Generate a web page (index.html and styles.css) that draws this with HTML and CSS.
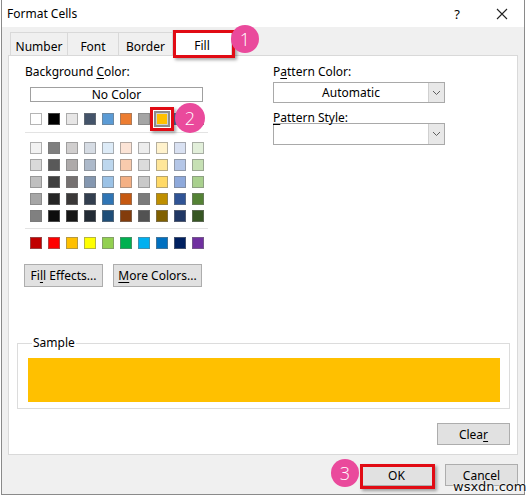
FILE: index.html
```html
<!DOCTYPE html>
<html>
<head>
<meta charset="utf-8">
<link rel="stylesheet" href="styles.css">
</head>
<body>
<div class="window">
  <div class="titlebar">
    <span class="title">Format Cells</span>
    <span class="help">?</span>
    <svg class="close" width="12" height="12" viewBox="0 0 12 12"><path d="M1 1L11 11M11 1L1 11" stroke="#222" stroke-width="1.1" fill="none"/></svg>
  </div>
  <div class="client">
    <div class="tabs">
      <div class="tab tab-number">Number</div>
      <div class="tab tab-font">Font</div>
      <div class="tab tab-border">Border</div>
      <div class="tab tab-fill active">Fill</div>
    </div>
    <div class="panel">
      <div class="top">
        <div class="left">
          <div class="label bg-label">Background <u>C</u>olor:</div>
          <div class="nocolor">No Color</div>
          <div class="swatches row1">
            <span class="sw" style="background:#FFFFFF"></span>
            <span class="sw" style="background:#000000"></span>
            <span class="sw" style="background:#E7E6E6"></span>
            <span class="sw" style="background:#44546A"></span>
            <span class="sw" style="background:#5B9BD5"></span>
            <span class="sw" style="background:#ED7D31"></span>
            <span class="sw" style="background:#A5A5A5"></span>
            <span class="sw selected" style="background:#FFC000"></span>
            <span class="sw" style="background:#4472C4"></span>
            <span class="sw" style="background:#70AD47"></span>
          </div>
          <div class="sep"></div>
          <div class="swatches theme">
            <span class="sw" style="background:#F2F2F2"></span>
            <span class="sw" style="background:#7F7F7F"></span>
            <span class="sw" style="background:#D0CECE"></span>
            <span class="sw" style="background:#D6DCE4"></span>
            <span class="sw" style="background:#DDEBF7"></span>
            <span class="sw" style="background:#FCE4D6"></span>
            <span class="sw" style="background:#EDEDED"></span>
            <span class="sw" style="background:#FFF2CC"></span>
            <span class="sw" style="background:#D9E1F2"></span>
            <span class="sw" style="background:#E2EFDA"></span>

            <span class="sw" style="background:#D9D9D9"></span>
            <span class="sw" style="background:#595959"></span>
            <span class="sw" style="background:#AEAAAA"></span>
            <span class="sw" style="background:#ACB9CA"></span>
            <span class="sw" style="background:#BDD7EE"></span>
            <span class="sw" style="background:#F8CBAD"></span>
            <span class="sw" style="background:#DBDBDB"></span>
            <span class="sw" style="background:#FFE699"></span>
            <span class="sw" style="background:#B4C6E7"></span>
            <span class="sw" style="background:#C6E0B4"></span>

            <span class="sw" style="background:#BFBFBF"></span>
            <span class="sw" style="background:#404040"></span>
            <span class="sw" style="background:#757171"></span>
            <span class="sw" style="background:#8497B0"></span>
            <span class="sw" style="background:#9BC2E6"></span>
            <span class="sw" style="background:#F4B084"></span>
            <span class="sw" style="background:#C9C9C9"></span>
            <span class="sw" style="background:#FFD966"></span>
            <span class="sw" style="background:#8EA9DB"></span>
            <span class="sw" style="background:#A9D08E"></span>

            <span class="sw" style="background:#A6A6A6"></span>
            <span class="sw" style="background:#262626"></span>
            <span class="sw" style="background:#3A3838"></span>
            <span class="sw" style="background:#333F4F"></span>
            <span class="sw" style="background:#2F75B5"></span>
            <span class="sw" style="background:#C65911"></span>
            <span class="sw" style="background:#7B7B7B"></span>
            <span class="sw" style="background:#BF8F00"></span>
            <span class="sw" style="background:#305496"></span>
            <span class="sw" style="background:#548235"></span>

            <span class="sw" style="background:#808080"></span>
            <span class="sw" style="background:#0D0D0D"></span>
            <span class="sw" style="background:#161616"></span>
            <span class="sw" style="background:#222B35"></span>
            <span class="sw" style="background:#1F4E78"></span>
            <span class="sw" style="background:#833C0C"></span>
            <span class="sw" style="background:#525252"></span>
            <span class="sw" style="background:#806000"></span>
            <span class="sw" style="background:#203764"></span>
            <span class="sw" style="background:#375623"></span>
          </div>
          <div class="sep sep2"></div>
          <div class="swatches standard">
            <span class="sw" style="background:#C00000"></span>
            <span class="sw" style="background:#FF0000"></span>
            <span class="sw" style="background:#FFC000"></span>
            <span class="sw" style="background:#FFFF00"></span>
            <span class="sw" style="background:#92D050"></span>
            <span class="sw" style="background:#00B050"></span>
            <span class="sw" style="background:#00B0F0"></span>
            <span class="sw" style="background:#0070C0"></span>
            <span class="sw" style="background:#002060"></span>
            <span class="sw" style="background:#7030A0"></span>
          </div>
          <div class="btnrow">
            <div class="btn btn-fill">Fi<u>l</u>l Effects...</div>
            <div class="btn btn-more"><u>M</u>ore Colors...</div>
          </div>
        </div>
        <div class="right">
          <div class="label">P<u>a</u>ttern Color:</div>
          <div class="combo combo1">
            <span class="combo-text">Automatic</span>
            <span class="combo-arrow"><svg width="9" height="6" viewBox="0 0 9 6"><path d="M1 1L4.5 4.5L8 1" stroke="#606060" stroke-width="1" fill="none"/></svg></span>
          </div>
          <div class="label label2"><u>P</u>attern Style:</div>
          <div class="combo combo2">
            <span class="combo-text"></span>
            <span class="combo-arrow"><svg width="9" height="6" viewBox="0 0 9 6"><path d="M1 1L4.5 4.5L8 1" stroke="#606060" stroke-width="1" fill="none"/></svg></span>
          </div>
        </div>
      </div>
      <fieldset class="sample">
        <legend>Sample</legend>
        <div class="sample-fill"></div>
      </fieldset>
      <div class="clearrow">
        <div class="btn btn-clear">Clea<u>r</u></div>
      </div>
    </div>
    <div class="footer">
      <div class="btn btn-ok">OK</div>
      <div class="btn btn-cancel">Cancel</div>
    </div>
  </div>

  <div class="redbox rb1"></div>
  <div class="redbox rb2"></div>
  <div class="redbox rb3"></div>
  <div class="badge b1">1</div>
  <div class="badge b2">2</div>
  <div class="badge b3">3</div>
  <div class="watermark">wsxdn.com</div>
</div>
</body>
</html>
```

FILE: styles.css
```css
* { box-sizing: border-box; }
html, body { margin: 0; padding: 0; }
body {
  width: 527px;
  height: 495px;
  overflow: hidden;
  background: #ffffff;
  font-family: "Noto Sans", "Open Sans", sans-serif;
  font-size: 12px;
  color: #000;
}
u { text-decoration: underline; text-underline-offset: 2px; }

.window {
  position: relative;
  margin: 0 2px 0 1px;
  height: 495px;
  border: 1px solid #8a8a8a;
  border-top: none;
  display: flex;
  flex-direction: column;
  background: #fff;
}

.titlebar {
  height: 27px;
  flex: none;
  display: flex;
  align-items: center;
  background: #fff;
}
.title { margin-left: 5px; font-size: 12px; }
.help { margin-left: auto; margin-right: 36px; font-size: 13px; }
.close { margin-right: 16px; }

.client {
  flex: 1;
  background: #f0f0f0;
  padding: 3px 6px 0 6px;
  display: flex;
  flex-direction: column;
}

.tabs {
  height: 25px;
  display: flex;
  align-items: flex-end;
  padding-left: 2px;
  position: relative;
  z-index: 1;
}
.tab {
  height: 23px;
  border: 1px solid #d9d9d9;
  border-bottom: none;
  background: #f0f0f0;
  display: flex;
  align-items: center;
  justify-content: center;
  margin-right: -1px;
  padding-top: 5px;
  font-size: 12px;
}
.tab-number { width: 58px; }
.tab-font { width: 52px; }
.tab-border { width: 55px; }
.tab-fill { width: 60px; }
.tab.active {
  height: 26px;
  background: #fff;
  margin-bottom: -1px;
  padding-top: 4px;
}

.panel {
  height: 400px;
  flex: none;
  background: #fff;
  border: 1px solid #d9d9d9;
  padding: 8px 7px 0 8px;
}

.top {
  display: grid;
  grid-template-columns: 200px 172px;
  column-gap: 56px;
}
.left { padding-left: 7px; }
.label { height: 16px; line-height: 16px; }
.bg-label { margin-left: 1px; }

.nocolor {
  margin-top: 7px;
  margin-left: 6px;
  width: 173px;
  height: 15px;
  border: 1px solid #a0a0a0;
  text-align: center;
  line-height: 13px;
  font-size: 12px;
}

.swatches {
  display: grid;
  grid-template-columns: repeat(10, 12px);
  column-gap: 6px;
  row-gap: 5px;
  margin-left: 6px;
}
.row1 { margin-top: 11px; }
.theme { margin-top: 9px; }
.standard { margin-top: 8px; }
.sw {
  display: block;
  width: 12px;
  height: 12px;
  border: 1px solid rgba(120,120,120,0.55);
}
.sw.selected {
  outline: 2px solid #8c8c8c;
  outline-offset: 0px;
  border: 1px solid #d0d0d0;
}

.sep {
  margin-top: 7px;
  margin-left: 1px;
  width: 183px;
  height: 1px;
  background: #e3e3e3;
}
.sep2 { margin-top: 6px; }

.btnrow {
  margin-top: 15px;
  display: flex;
  gap: 10px;
}
.btn {
  height: 23px;
  background: #e1e1e1;
  border: 1px solid #adadad;
  display: flex;
  align-items: center;
  justify-content: center;
  font-size: 12px;
}
.btn-fill { width: 79px; }
.btn-more { width: 89px; }

.combo {
  margin-top: 2px;
  height: 21px;
  border: 1px solid #a9a9a9;
  display: flex;
  background: #fff;
}
.combo2 { height: 22px; margin-top: 0; }
.combo-text {
  flex: 1;
  text-align: center;
  line-height: 19px;
}
.combo-arrow {
  width: 16px;
  border-left: 1px solid #d0d0d0;
  background: #e8e8e8;
  display: flex;
  align-items: center;
  justify-content: center;
}
.label2 {
  margin-top: 9px;
  height: 11px;
  line-height: 11px;
}

.sample {
  margin: 49px 0 0 0;
  padding: 8px 9px 6px 10px;
  border: 1px solid #dcdcdc;
  min-width: 0;
}
.sample legend {
  padding: 0 1px;
  margin-left: 4px;
  line-height: 14px;
  font-size: 12px;
}
.sample-fill {
  height: 44px;
  background: #FFC000;
}

.clearrow {
  margin-top: 14px;
  display: flex;
  justify-content: flex-end;
}
.btn-clear { width: 73px; height: 22px; }

.footer {
  padding-top: 9px;
  display: flex;
  justify-content: flex-end;
  gap: 12px;
}
.btn-ok, .btn-cancel { width: 73px; height: 22px; }

.redbox {
  position: absolute;
  border: 3px solid #e10b14;
  box-shadow: 2px 2px 3px rgba(0,0,0,0.35);
  z-index: 5;
}
.rb1 { left: 171px; top: 30px; width: 62px; height: 28px; }
.rb2 { left: 148px; top: 107px; width: 24px; height: 24px; }
.rb3 { left: 358px; top: 464px; width: 75px; height: 25px; }

.badge {
  position: absolute;
  width: 28px;
  height: 28px;
  border-radius: 50%;
  background: #ea4a9c;
  color: #fff;
  font-family: "Open Sans", "Noto Sans", sans-serif;
  font-weight: 300;
  font-size: 18px;
  display: flex;
  align-items: center;
  justify-content: center;
  z-index: 6;
}
.b1 { left: 229px; top: 25px; }
.b2 { left: 173px; top: 103px; width: 30px; height: 30px; }
.b3 { left: 329px; top: 459px; }

.watermark {
  position: absolute;
  left: 451px;
  top: 479px;
  font-family: "DejaVu Sans", sans-serif;
  font-size: 13px;
  color: #111;
  text-shadow: 0 0 2px #fff, 0 0 2px #fff;
  z-index: 7;
}
```
